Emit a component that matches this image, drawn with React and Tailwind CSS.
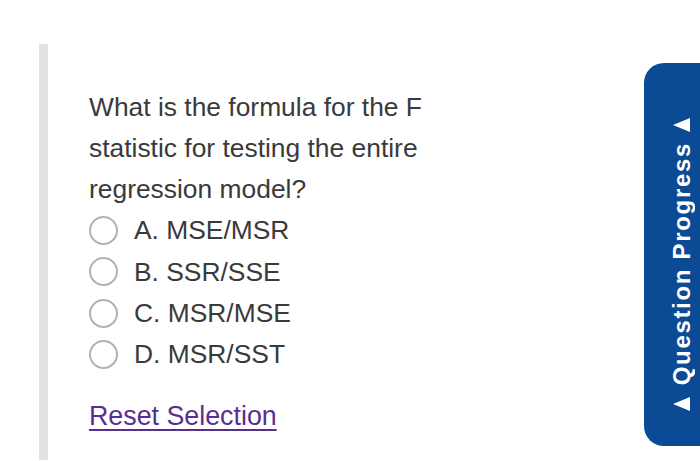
import React from "react";

const options = ["A. MSE/MSR", "B. SSR/SSE", "C. MSR/MSE", "D. MSR/SST"];

const Triangle = () => (
    <svg width="17" height="14" viewBox="0 0 17 14" className="block">
        <polygon points="0,7 17,0 17,14" fill="#ffffff" />
    </svg>
);

const Radio = ({ label }) => (
    <label className="flex items-center h-[41.3px] cursor-pointer">
        <span className="w-[29px] h-[29px] rounded-full border-[2px] border-[#b2b2b2] bg-white shrink-0" />
        <span className="ml-[16px] text-[26.4px] leading-none text-[#3a3a3a]">{label}</span>
    </label>
);

export default function App() {
    return (
        <div
            className="relative w-[700px] h-[461px] bg-white overflow-hidden flex"
            style={{ fontFamily: '"Liberation Sans", Arial, sans-serif' }}
        >
            {/* left rule */}
            <div className="ml-[39px] mt-[44px] w-[9px] h-[416px] bg-[#e2e2e2]" />

            {/* question */}
            <div className="pl-[41px] pt-[87px]">
                <p className="text-[26.4px] leading-[41px] text-[#3a3a3a] w-[360px]">
                    What is the formula for the F statistic for testing the entire regression model?
                </p>
                <div className="flex flex-col">
                    {options.map((o) => (
                        <Radio key={o} label={o} />
                    ))}
                </div>
                <a
                    href="#"
                    className="inline-block mt-[26px] text-[26.8px] leading-[30px] text-[#5a2e91] underline underline-offset-[4px] decoration-[1.5px]"
                >
                    Reset Selection
                </a>
            </div>

            {/* side tab */}
            <div className="absolute left-[644px] top-[63px] w-[70px] h-[383px] rounded-l-[20px] bg-[#0b4a94] flex flex-col items-start pl-[29px] pt-[55px]">
                <Triangle />
                <div className="mt-[10px] -ml-[3px] [writing-mode:vertical-rl] rotate-180 text-white font-bold text-[24px] leading-[24px] tracking-[0.07em]">
                    Question Progress
                </div>
                <div className="mt-[12px]">
                    <Triangle />
                </div>
            </div>
        </div>
    );
}
